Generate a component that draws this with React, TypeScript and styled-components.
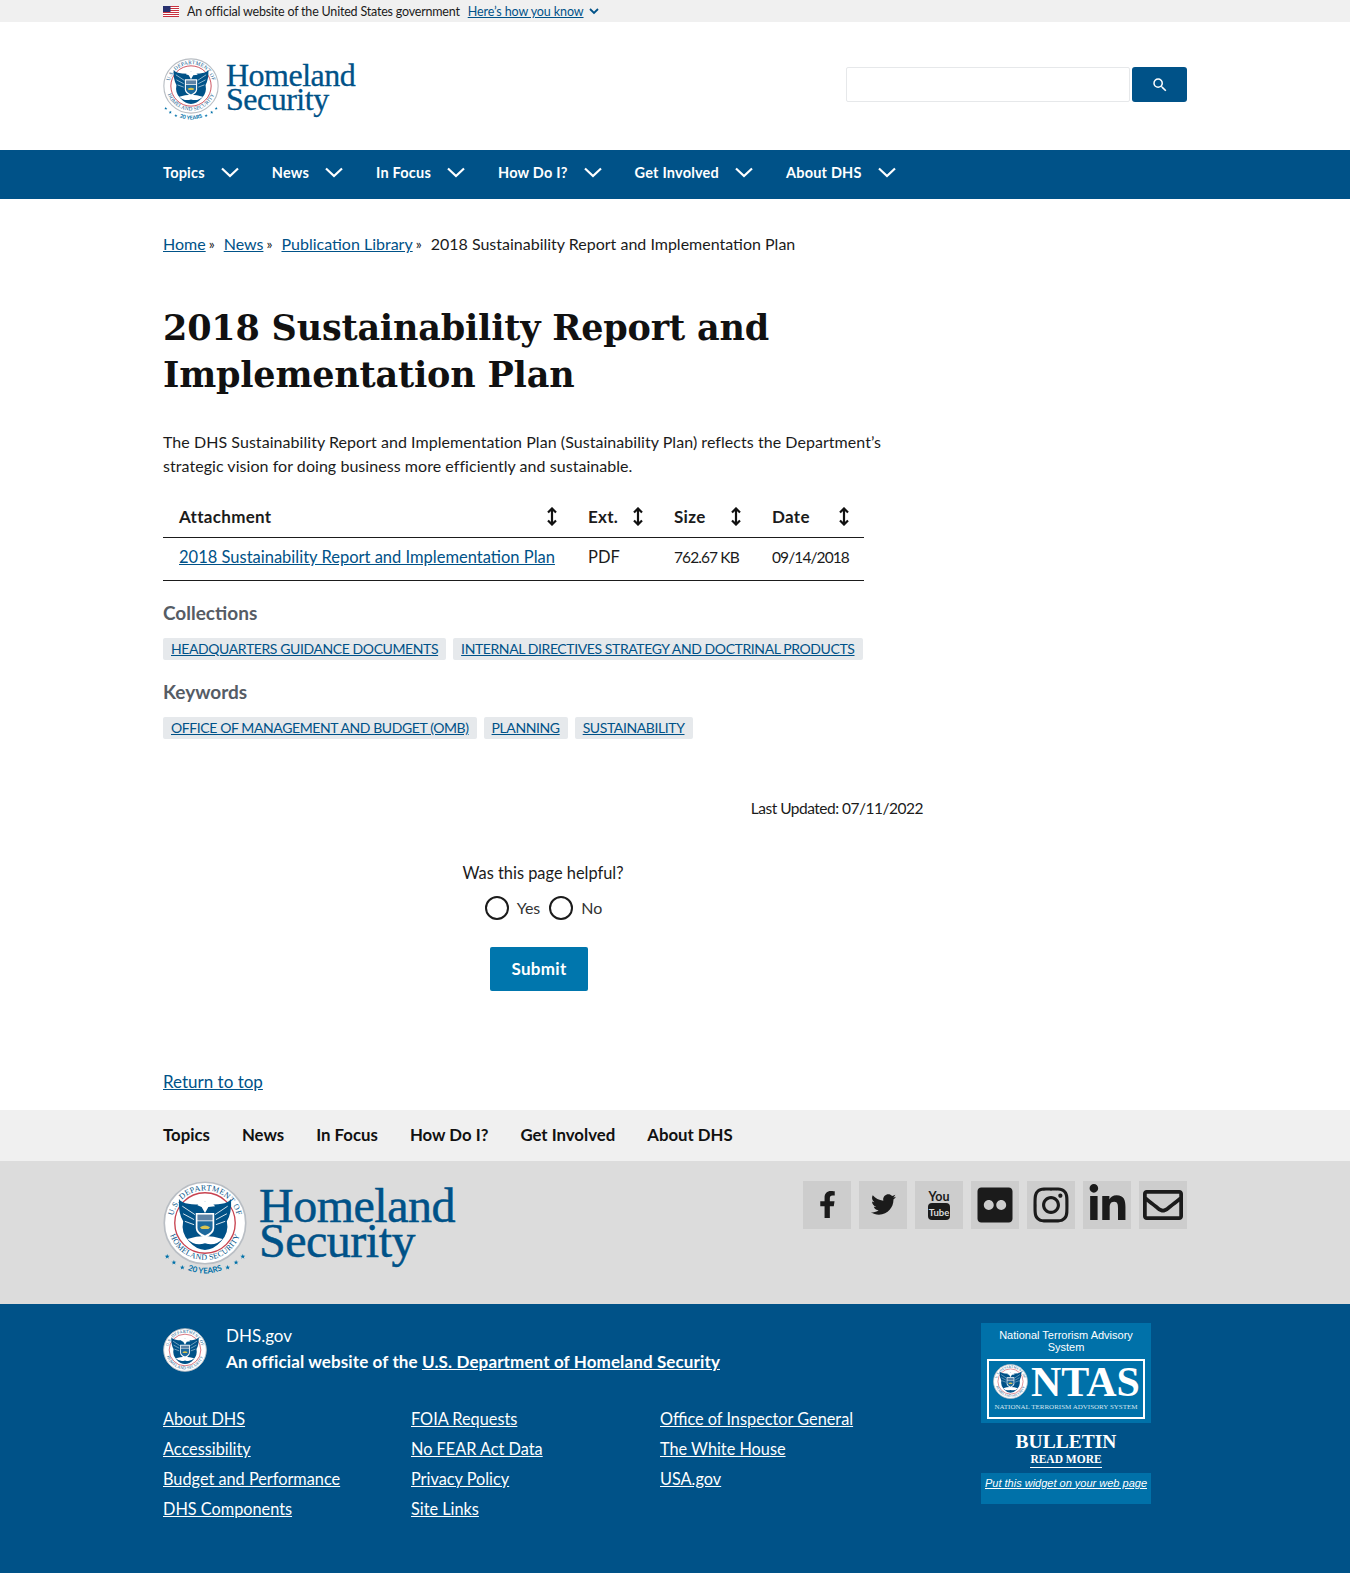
import React from 'react';
import styled, {createGlobalStyle} from 'styled-components';
import {FaFacebookF, FaFlickr, FaInstagram, FaLinkedinIn, FaRegEnvelope, FaTwitter} from 'react-icons/fa';

const sans = '"Lato", "Open Sans", sans-serif';
const serif = '"Liberation Serif", "DejaVu Serif", serif';

const navItems = ['Topics', 'News', 'In Focus', 'How Do I?', 'Get Involved', 'About DHS'];
const footerColumns = [
    ['About DHS', 'Accessibility', 'Budget and Performance', 'DHS Components'],
    ['FOIA Requests', 'No FEAR Act Data', 'Privacy Policy', 'Site Links'],
    ['Office of Inspector General', 'The White House', 'USA.gov'],
];

const GlobalStyle = createGlobalStyle`
    html, body {
        margin: 0;
        padding: 0;
        background: #ffffff;
    }
    body {
        font-family: ${sans};
        font-size: 16px;
        color: #1b1b1b;
    }
    * {
        box-sizing: border-box;
    }
`;

const starPoints = '0,-3 0.8,-0.9 2.9,-0.9 1.2,0.4 1.8,2.5 0,1.2 -1.8,2.5 -1.2,0.4 -2.9,-0.9 -0.8,-0.9';

const Seal: React.FC<{size: number; years?: boolean}> = function ({size, years}) {
    const id = `seal-${size}`;
    return (
        <SealSvg width={size} height={years ? size * 1.16 : size} viewBox={years ? '0 0 100 116' : '0 0 100 100'}>
            <defs>
                <path id={`${id}-top`} d="M 11 50 A 39 39 0 0 1 89 50" />
                <path id={`${id}-bot`} d="M 6 50 A 44 44 0 0 0 94 50" />
                <path id={`${id}-yrs`} d="M 18 100 Q 50 120 82 100" />
            </defs>
            <circle cx="50" cy="50" r="48.5" fill="#ffffff" stroke="#b9bec4" strokeWidth="2" />
            <circle cx="50" cy="50" r="36" fill="#ffffff" stroke="#c8424f" strokeWidth="1.6" />
            <text fontSize="9.5" fontFamily={serif} fill="#005288" letterSpacing="0.5">
                <textPath href={`#${id}-top`} startOffset="50%" textAnchor="middle">U.S. DEPARTMENT OF</textPath>
            </text>
            <text fontSize="9.5" fontFamily={serif} fill="#005288" letterSpacing="0.3">
                <textPath href={`#${id}-bot`} startOffset="50%" textAnchor="middle">HOMELAND SECURITY</textPath>
            </text>
            <path d="M44 28 Q22 28 19 21 Q18 38 24 48 Q21 62 31 72 Q40 82 50 82 Q60 82 69 72 Q79 62 76 48 Q82 38 81 21 Q78 28 56 28 L50 24 Z" fill="#005288" />
            <path d="M23 30 L38 40 M24 39 L37 46 M26 48 L37 52 M77 30 L62 40 M76 39 L63 46 M74 48 L63 52" stroke="#ffffff" strokeWidth="1" />
            <path d="M44 24 L57 24 L62 30 L54 31 L50 38 L46 31 L41 29 Z" fill="#ffffff" />
            <path d="M39 38 H61 V56 Q61 63 50 68 Q39 63 39 56 Z" fill="#ffffff" />
            <path d="M41 40 H59 V47 H41 Z" fill="#5d83a6" />
            <path d="M41 48 H59 V56 Q59 61 50 65 Q41 61 41 56 Z" fill="#1d6a9e" />
            <path d="M44 55 Q50 51 56 55 L54 57 H46 Z" fill="#d9c34f" />
            <path d="M29 69 Q50 62 71 69 Q62 78 50 74 Q38 78 29 69 Z" fill="#ffffff" />
            {years && (
                <>
                    {[[5, 90], [13, 97], [23, 103], [77, 103], [87, 97], [95, 90]].map(([x, y]) => (
                        <polygon key={x} points={starPoints} transform={`translate(${x} ${y})`} fill="#0071a9" />
                    ))}
                    <text fontSize="9.5" fontFamily={sans} fontWeight="700" fill="#0071a9">
                        <textPath href={`#${id}-yrs`} startOffset="50%" textAnchor="middle">20 YEARS</textPath>
                    </text>
                </>
            )}
        </SealSvg>
    );
};

const Chevron: React.FC = function () {
    return (
        <svg width="18" height="11" viewBox="0 0 18 11" fill="none" stroke="#ffffff" strokeWidth="2.2">
            <path d="M1 1.5 L9 9 L17 1.5" />
        </svg>
    );
};

const SortIcon: React.FC = function () {
    return (
        <svg width="12" height="19" viewBox="0 0 12 19" fill="none" stroke="#111111" strokeWidth="2.2">
            <path d="M6 2 V17 M2 5.5 L6 1.5 L10 5.5 M2 13.5 L6 17.5 L10 13.5" />
        </svg>
    );
};

const Flag: React.FC = function () {
    return (
        <svg width="16" height="11" viewBox="0 0 16 11">
            <rect width="16" height="11" fill="#ffffff" />
            {[0, 2, 4, 6, 8, 10].map(y => (
                <rect key={y} y={y} width="16" height="1" fill="#c8313e" />
            ))}
            <rect width="7.5" height="6" fill="#28316f" />
        </svg>
    );
};

const YoutubeIcon: React.FC = function () {
    return (
        <svg width="26" height="32" viewBox="0 0 26 32">
            <text x="13" y="12" textAnchor="middle" fontSize="12.5" fontWeight="700" fontFamily={sans} fill="#1b1b1b">You</text>
            <rect x="2" y="14" width="22" height="17" rx="4" fill="#1b1b1b" />
            <text x="13" y="26.5" textAnchor="middle" fontSize="9.5" fontWeight="700" fontFamily={sans} fill="#dcdcdc">Tube</text>
        </svg>
    );
};

const App: React.FC = function () {
    return (
        <>
            <GlobalStyle />
            <GovBanner>
                <Container>
                    <GovRow>
                        <Flag />
                        <GovText>An official website of the United States government</GovText>
                        <GovLink href="#">Here’s how you know</GovLink>
                        <svg width="10" height="7" viewBox="0 0 10 7" fill="none" stroke="#005288" strokeWidth="1.8">
                            <path d="M1 1 L5 5 L9 1" />
                        </svg>
                    </GovRow>
                </Container>
            </GovBanner>
            <Header>
                <HeaderRow>
                    <Logo $small>
                        <Seal size={56} years />
                        <LogoWords $small>
                            Homeland
                            <br />
                            Security
                        </LogoWords>
                    </Logo>
                    <SearchForm>
                        <SearchInput aria-label="Search" />
                        <SearchButton aria-label="Search">
                            <svg width="18" height="18" viewBox="0 0 24 24" fill="#ffffff">
                                <path d="M15.5 14h-.79l-.28-.27A6.47 6.47 0 0 0 16 9.5 6.5 6.5 0 1 0 9.5 16c1.61 0 3.09-.59 4.23-1.57l.27.28v.79l5 4.99L20.49 19l-4.99-5zm-6 0C7.01 14 5 11.99 5 9.5S7.01 5 9.5 5 14 7.01 14 9.5 11.99 14 9.5 14z" />
                            </svg>
                        </SearchButton>
                    </SearchForm>
                </HeaderRow>
            </Header>
            <MainNav>
                <Container>
                    <NavList>
                        {navItems.map(item => (
                            <NavItem key={item}>
                                <NavLabel>{item}</NavLabel>
                                <Chevron />
                            </NavItem>
                        ))}
                    </NavList>
                </Container>
            </MainNav>
            <Container>
                <Breadcrumb>
                    <TextLink href="#">Home</TextLink>
                    <Sep>»</Sep>
                    <TextLink href="#">News</TextLink>
                    <Sep>»</Sep>
                    <TextLink href="#">Publication Library</TextLink>
                    <Sep>»</Sep>
                    <span>2018 Sustainability Report and Implementation Plan</span>
                </Breadcrumb>
                <Content>
                    <Title>2018 Sustainability Report and Implementation Plan</Title>
                    <Intro>
                        The DHS Sustainability Report and Implementation Plan (Sustainability Plan) reflects the Department’s strategic vision for doing business more efficiently and sustainable.
                    </Intro>
                    <FileTable>
                        <colgroup>
                            <col width="409" />
                            <col width="86" />
                            <col width="98" />
                            <col width="108" />
                        </colgroup>
                        <thead>
                            <tr>
                                {['Attachment', 'Ext.', 'Size', 'Date'].map(h => (
                                    <HeadCell key={h}>
                                        <HeadInner>
                                            {h}
                                            <SortIcon />
                                        </HeadInner>
                                    </HeadCell>
                                ))}
                            </tr>
                        </thead>
                        <tbody>
                            <tr>
                                <BodyCell>
                                    <TextLink href="#">2018 Sustainability Report and Implementation Plan</TextLink>
                                </BodyCell>
                                <BodyCell>PDF</BodyCell>
                                <BodyCell $numeric>762.67 KB</BodyCell>
                                <BodyCell $numeric>09/14/2018</BodyCell>
                            </tr>
                        </tbody>
                    </FileTable>
                    <SectionLabel>Collections</SectionLabel>
                    <TagRow>
                        <Tag href="#">HEADQUARTERS GUIDANCE DOCUMENTS</Tag>
                        <Tag href="#">INTERNAL DIRECTIVES STRATEGY AND DOCTRINAL PRODUCTS</Tag>
                    </TagRow>
                    <SectionLabel>Keywords</SectionLabel>
                    <TagRow>
                        <Tag href="#">OFFICE OF MANAGEMENT AND BUDGET (OMB)</Tag>
                        <Tag href="#">PLANNING</Tag>
                        <Tag href="#">SUSTAINABILITY</Tag>
                    </TagRow>
                    <LastUpdated>Last Updated: 07/11/2022</LastUpdated>
                    <Feedback>
                        <FeedbackQuestion>Was this page helpful?</FeedbackQuestion>
                        <RadioRow>
                            <Radio />
                            <RadioLabel>Yes</RadioLabel>
                            <Radio />
                            <RadioLabel>No</RadioLabel>
                        </RadioRow>
                        <SubmitButton>Submit</SubmitButton>
                    </Feedback>
                </Content>
                <ReturnTop>
                    <TextLink href="#">Return to top</TextLink>
                </ReturnTop>
            </Container>
            <FooterNav>
                <Container>
                    <FooterNavList>
                        {navItems.map(item => (
                            <FooterNavItem key={item}>{item}</FooterNavItem>
                        ))}
                    </FooterNavList>
                </Container>
            </FooterNav>
            <LogoBar>
                <LogoBarRow>
                    <Logo>
                        <Seal size={84} years />
                        <LogoWords>
                            Homeland
                            <br />
                            Security
                        </LogoWords>
                    </Logo>
                    <SocialRow>
                        <SocialTile><FaFacebookF size={27} /></SocialTile>
                        <SocialTile><FaTwitter size={25} /></SocialTile>
                        <SocialTile><YoutubeIcon /></SocialTile>
                        <SocialTile><FaFlickr size={40} /></SocialTile>
                        <SocialTile><FaInstagram size={40} /></SocialTile>
                        <SocialTile><FaLinkedinIn size={41} /></SocialTile>
                        <SocialTile><FaRegEnvelope size={40} /></SocialTile>
                    </SocialRow>
                </LogoBarRow>
            </LogoBar>
            <Footer>
                <FooterRow>
                    <FooterMain>
                        <Identity>
                            <Seal size={44} />
                            <div>
                                <IdentityDomain>DHS.gov</IdentityDomain>
                                <IdentityLine>
                                    An official website of the <FooterLink href="#">U.S. Department of Homeland Security</FooterLink>
                                </IdentityLine>
                            </div>
                        </Identity>
                        <FooterGrid>
                            {footerColumns.map((col, i) => (
                                <FooterColumn key={i}>
                                    {col.map(link => (
                                        <FooterLink key={link} href="#">{link}</FooterLink>
                                    ))}
                                </FooterColumn>
                            ))}
                        </FooterGrid>
                    </FooterMain>
                    <Widget>
                        <WidgetTop>
                            <WidgetTitle>National Terrorism Advisory System</WidgetTitle>
                            <NtasBox>
                                <NtasRow>
                                    <Seal size={35} />
                                    <NtasWord>NTAS</NtasWord>
                                </NtasRow>
                                <NtasSub>NATIONAL TERRORISM ADVISORY SYSTEM</NtasSub>
                            </NtasBox>
                        </WidgetTop>
                        <Bulletin>
                            <BulletinWord>BULLETIN</BulletinWord>
                            <ReadMore>READ MORE</ReadMore>
                        </Bulletin>
                        <WidgetBottom>
                            <WidgetLink href="#">Put this widget on your web page</WidgetLink>
                        </WidgetBottom>
                    </Widget>
                </FooterRow>
            </Footer>
        </>
    );
};

/* Styled components */

const SealSvg = styled.svg`
    display: block;
    flex: none;
`;

const Container = styled.div`
    width: 1024px;
    margin-left: 163px;
`;

const GovBanner = styled.div`
    height: 22px;
    background: #f0f0f0;
`;

const GovRow = styled.div`
    display: flex;
    align-items: center;
    height: 22px;
    font-size: 12.5px;
`;

const GovText = styled.span`
    margin-left: 8px;
    letter-spacing: -0.2px;
    color: #1b1b1b;
`;

const GovLink = styled.a`
    margin: 0 5px 0 8px;
    letter-spacing: -0.1px;
    color: #005288;
    text-decoration: underline;
`;

const Header = styled.header`
    height: 128px;
`;

const HeaderRow = styled(Container)`
    display: flex;
    justify-content: space-between;
    align-items: flex-start;
    padding-top: 36px;
`;

const Logo = styled.div<{$small?: boolean}>`
    display: flex;
    align-items: flex-start;
    gap: ${p => (p.$small ? '7px' : '12px')};
`;

const LogoWords = styled.div<{$small?: boolean}>`
    font-family: ${serif};
    color: #005288;
    font-size: ${p => (p.$small ? '32px' : '48px')};
    line-height: ${p => (p.$small ? '24px' : '35px')};
    padding-top: ${p => (p.$small ? '5px' : '7px')};
    letter-spacing: -0.5px;
    -webkit-text-stroke: ${p => (p.$small ? '0.3px' : '0.5px')} #005288;
`;

const SearchForm = styled.form`
    display: flex;
    gap: 2px;
    margin-top: 9px;
`;

const SearchInput = styled.input`
    width: 284px;
    height: 35px;
    background: #ffffff;
    border: 1px solid #e6e8ea;
    border-radius: 2px;
`;

const SearchButton = styled.button`
    width: 55px;
    height: 35px;
    display: flex;
    align-items: center;
    justify-content: center;
    background: #005288;
    border: none;
    border-radius: 3px;
`;

const MainNav = styled.nav`
    height: 49px;
    background: #005288;
`;

const NavList = styled.div`
    display: flex;
    gap: 33px;
    height: 45px;
    align-items: center;
`;

const NavItem = styled.div`
    display: flex;
    align-items: center;
    gap: 16px;
`;

const NavLabel = styled.span`
    color: #ffffff;
    font-weight: 700;
    font-size: 14.5px;
    letter-spacing: 0.2px;
    white-space: nowrap;
`;

const Breadcrumb = styled.div`
    display: flex;
    align-items: center;
    padding-top: 34px;
    font-size: 16px;
    line-height: 22px;
`;

const Sep = styled.span`
    margin: 0 9px 0 3px;
    font-size: 14px;
`;

const TextLink = styled.a`
    color: #005288;
    text-decoration: underline;
`;

const Content = styled.main`
    width: 760px;
`;

const Title = styled.h1`
    margin: 49px 0 0;
    font-family: "DejaVu Serif", serif;
    font-weight: 700;
    font-size: 35px;
    line-height: 47px;
    letter-spacing: -0.2px;
    color: #111111;
`;

const Intro = styled.p`
    margin: 32px 0 0;
    font-size: 16px;
    line-height: 24px;
    letter-spacing: 0.05px;
    color: #1b1b1b;
`;

const FileTable = styled.table`
    width: 701px;
    margin-top: 22px;
    border-collapse: collapse;
    table-layout: fixed;
`;

const HeadCell = styled.th`
    height: 37px;
    padding: 0 14px 4px 16px;
    border-bottom: 1px solid #1b1b1b;
    text-align: left;
    font-size: 17px;
    font-weight: 700;
    letter-spacing: 0.3px;
`;

const HeadInner = styled.div`
    display: flex;
    justify-content: space-between;
    align-items: center;
`;

const BodyCell = styled.td<{$numeric?: boolean}>`
    height: 43px;
    padding: 0 0 3px 16px;
    border-bottom: 1px solid #1b1b1b;
    font-size: ${p => (p.$numeric ? '15.5px' : '16.5px')};
    letter-spacing: ${p => (p.$numeric ? '-0.9px' : '0')};
    white-space: nowrap;
`;

const SectionLabel = styled.h2`
    margin: 19px 0 0;
    font-size: 19px;
    line-height: 26px;
    font-weight: 700;
    color: #565c65;
`;

const TagRow = styled.div`
    display: flex;
    gap: 7px;
    margin-top: 12px;
`;

const Tag = styled.a`
    padding: 0 8px;
    height: 22px;
    line-height: 22px;
    background: #e6e9ec;
    border-radius: 2px;
    color: #005288;
    font-size: 14px;
    letter-spacing: -0.4px;
    text-decoration: underline;
    white-space: nowrap;
`;

const LastUpdated = styled.div`
    margin-top: 58px;
    text-align: right;
    font-size: 15.5px;
    letter-spacing: -0.5px;
    line-height: 22px;
`;

const Feedback = styled.div`
    display: flex;
    flex-direction: column;
    align-items: center;
    margin-top: 42px;
`;

const FeedbackQuestion = styled.div`
    font-size: 16.4px;
    line-height: 24px;
`;

const RadioRow = styled.div`
    display: flex;
    align-items: center;
    margin-top: 11px;
    padding-left: 10px;
`;

const Radio = styled.span`
    width: 24px;
    height: 24px;
    border-radius: 50%;
    border: 2px solid #1b1b1b;
    background: #ffffff;
`;

const RadioLabel = styled.span`
    margin: 0 9px 0 8px;
    font-size: 16px;
    color: #333333;
`;

const SubmitButton = styled.button`
    width: 98px;
    height: 44px;
    margin: 27px 8px 0 0;
    background: #0076ad;
    border: none;
    border-radius: 2px;
    color: #ffffff;
    font-family: ${sans};
    font-weight: 700;
    font-size: 17px;
    letter-spacing: 0.3px;
`;

const ReturnTop = styled.div`
    margin-top: 80px;
    height: 39px;
    font-size: 17px;
    line-height: 22px;
`;

const FooterNav = styled.div`
    height: 51px;
    background: #f0f0f0;
`;

const FooterNavList = styled.div`
    display: flex;
    gap: 32px;
    align-items: center;
    height: 50px;
`;

const FooterNavItem = styled.div`
    font-weight: 700;
    font-size: 16.8px;
    color: #111111;
`;

const LogoBar = styled.div`
    height: 143px;
    background: #dcdcdc;
`;

const LogoBarRow = styled(Container)`
    display: flex;
    justify-content: space-between;
    align-items: flex-start;
    padding-top: 20px;
`;

const SocialRow = styled.div`
    display: flex;
    gap: 8px;
`;

const SocialTile = styled.div`
    width: 48px;
    height: 48px;
    display: flex;
    align-items: center;
    justify-content: center;
    background: #cdcdcd;
    color: #1b1b1b;
`;

const Footer = styled.footer`
    height: 269px;
    background: #005288;
    color: #ffffff;
`;

const FooterRow = styled(Container)`
    display: flex;
    justify-content: space-between;
    padding-top: 19px;
`;

const FooterMain = styled.div`
    flex: 1;
`;

const Identity = styled.div`
    display: flex;
    align-items: flex-start;
    gap: 19px;
    padding-top: 5px;
    font-size: 17px;
`;

const IdentityDomain = styled.div`
    line-height: 24px;
    margin-top: -4px;
`;

const IdentityLine = styled.div`
    margin-top: 2px;
    line-height: 24px;
    font-weight: 700;
    letter-spacing: 0.12px;
`;

const FooterGrid = styled.div`
    display: grid;
    grid-template-columns: 248px 249px 1fr;
    margin-top: 33px;
`;

const FooterColumn = styled.div`
    display: flex;
    flex-direction: column;
    align-items: flex-start;
    gap: 6px;
    font-size: 16.3px;
`;

const FooterLink = styled.a`
    color: #ffffff;
    text-decoration: underline;
    line-height: 24px;
`;

const Widget = styled.div`
    width: 170px;
    margin-right: 36px;
    flex: none;
    display: flex;
    flex-direction: column;
    font-family: "Liberation Sans", sans-serif;
`;

const WidgetTop = styled.div`
    height: 100px;
    padding: 6px 6px 0;
    background: #0071a9;
    text-align: center;
`;

const WidgetTitle = styled.div`
    font-size: 11px;
    line-height: 12px;
`;

const NtasBox = styled.div`
    height: 60px;
    margin-top: 6px;
    border: 2px solid #ffffff;
    padding: 3px 4px 0;
`;

const NtasRow = styled.div`
    display: flex;
    align-items: center;
    gap: 3px;
    height: 36px;
`;

const NtasWord = styled.div`
    font-family: ${serif};
    font-weight: 700;
    font-size: 42px;
    line-height: 36px;
`;

const NtasSub = styled.div`
    margin-top: 2px;
    font-family: ${serif};
    font-size: 7px;
    line-height: 10px;
    white-space: nowrap;
    text-align: center;
    color: #d5e5ef;
`;

const Bulletin = styled.div`
    height: 50px;
    padding-top: 9px;
    display: flex;
    flex-direction: column;
    align-items: center;
    font-family: ${serif};
    font-weight: 700;
`;

const BulletinWord = styled.div`
    font-size: 19.5px;
    line-height: 20px;
`;

const ReadMore = styled.div`
    font-size: 11.5px;
    line-height: 15px;
    border-bottom: 1px solid #ffffff;
`;

const WidgetBottom = styled.div`
    height: 31px;
    background: #0071a9;
    text-align: center;
`;

const WidgetLink = styled.a`
    color: #ffffff;
    font-size: 11px;
    line-height: 15px;
    font-style: italic;
    text-decoration: underline;
`;

export default App;
